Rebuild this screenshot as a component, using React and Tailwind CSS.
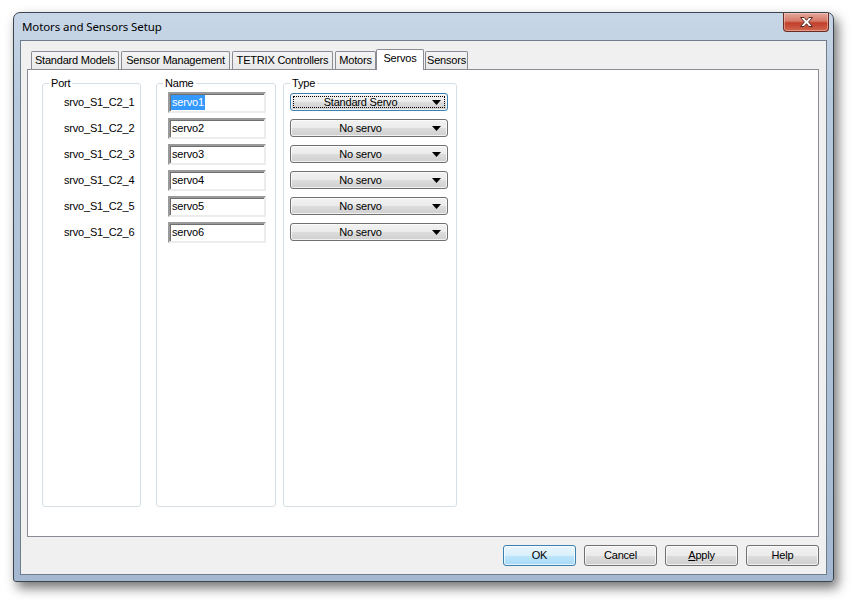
import React from 'react';

const ports = [1, 2, 3, 4, 5, 6];
const types = ['Standard Servo', 'No servo', 'No servo', 'No servo', 'No servo', 'No servo'];

const tabs = [
  { label: 'Standard Models', cls: 'ml-[4px] w-[88px]' },
  { label: 'Sensor Management', cls: 'ml-[2px] w-[109px]' },
  { label: 'TETRIX Controllers', cls: 'ml-[2px] w-[101px]' },
  { label: 'Motors', cls: 'ml-[2px] w-[41px]' },
  { label: 'Servos', cls: 'w-[48px]', active: true },
  { label: 'Sensors', cls: 'ml-[1px] w-[43px]' },
];

const btnBase =
  'w-[73px] h-[21px] rounded-[3px] border flex items-center justify-center text-black shadow-[inset_0_0_0_1px_rgba(255,255,255,0.7)]';
const btnGray =
  'border-[#707070] bg-[linear-gradient(180deg,#f2f2f2_0%,#ebebeb_50%,#dddddd_51%,#cfcfcf_100%)]';
const btnBlue =
  'border-[#3c7fb1] bg-[linear-gradient(180deg,#eaf6fd_0%,#d9f0fc_50%,#bee6fd_51%,#a7d9f5_100%)]';

const CloseGlyph = () => (
  <svg width="15" height="12" viewBox="0 0 15 12">
    <path
      d="M1.5 1.5 L5.2 1.5 L7.5 4.3 L9.8 1.5 L13.5 1.5 L9.6 6 L13.5 10.5 L9.8 10.5 L7.5 7.7 L5.2 10.5 L1.5 10.5 L5.4 6 Z"
      fill="#ffffff"
      stroke="#5a2a22"
      strokeWidth="1"
      strokeLinejoin="round"
    />
  </svg>
);

const Dropdown = ({ value, focused }) => (
  <div
    className={`relative ml-[6px] w-[158px] h-[18px] rounded-[3px] border flex items-center bg-[linear-gradient(180deg,#f2f2f2_0%,#ebebeb_50%,#dddddd_51%,#cfcfcf_100%)] shadow-[inset_0_0_0_1px_rgba(255,255,255,0.7)] ${
      focused ? 'border-[#3c7fb1]' : 'border-[#707070]'
    }`}
  >
    {focused && (
      <div className="absolute left-[2px] right-[2px] top-[2px] bottom-[2px] border border-dotted border-black" />
    )}
    <div className="flex-1 text-center pl-[2px]">{value}</div>
    <svg width="9" height="5" viewBox="0 0 9 5" className="mr-[6px] ml-[4px]">
      <path d="M0 0 H9 L4.5 5 Z" fill="#000" />
    </svg>
  </div>
);

const Group = ({ label, cls, children }) => (
  <fieldset className={`h-[430px] border border-[#d5dfe5] rounded-[3px] ${cls}`}>
    <legend className="ml-[6px] px-[2px] leading-[12px] text-[11px]">{label}</legend>
    {children}
  </fieldset>
);

export default function App() {
  return (
    <div className="w-[852px] h-[601px] bg-white pt-[12px] pl-[13px] font-['Liberation_Sans',Arial,sans-serif] text-[11px] tracking-[-0.2px] text-black">
      <div className="w-[821px] h-[570px] flex flex-col border border-[#3b4550] rounded-t-[7px] rounded-b-[3px] bg-[linear-gradient(180deg,#c8d7e7_0%,#b7c9dd_15%,#a4b9d1_100%)] shadow-[4px_6px_12px_rgba(0,0,0,0.55)]">
        {/* title bar */}
        <div className="h-[27px] flex items-start shrink-0">
          <div className="flex-1 pl-[8px] pt-[6px] font-['Noto_Sans','Open_Sans',sans-serif] text-[11.5px] tracking-[-0.1px] leading-[16px]">
            Motors and Sensors Setup
          </div>
          <div className="mr-[4px] w-[46px] h-[19px] rounded-b-[4px] border border-t-0 border-[#6b2c24] flex items-center justify-center bg-[linear-gradient(180deg,#e3a89c_0%,#d67a68_45%,#c23f2b_55%,#d0664f_100%)] shadow-[inset_0_0_0_1px_rgba(255,220,210,0.45)]">
            <CloseGlyph />
          </div>
        </div>

        {/* client area */}
        <div className="mx-[6px] h-[535px] border border-[#6f7d8c] bg-[#f0f0f0] flex flex-col pt-[8px] pl-[6px] pr-[7px]">
          <div className="h-[20px] flex items-end">
            {tabs.map((t) =>
              t.active ? (
                <div
                  key={t.label}
                  className={`relative z-10 -mb-px h-[21px] bg-white border border-b-0 border-[#898c95] rounded-t-[2px] flex justify-center pt-[2px] leading-[13px] ${t.cls}`}
                >
                  {t.label}
                </div>
              ) : (
                <div
                  key={t.label}
                  className={`h-[18px] border border-b-0 border-[#898c95] rounded-t-[2px] bg-[linear-gradient(180deg,#f4f4f4_0%,#e8e8e8_100%)] flex justify-center pt-[2px] leading-[13px] ${t.cls}`}
                >
                  {t.label}
                </div>
              )
            )}
          </div>

          <div className="h-[468px] bg-white border border-[#898c95] flex items-start pt-[7px] pl-[14px]">
            <Group label="Port" cls="w-[99px]">
              {ports.map((p) => (
                <div key={p} className="h-[26px] flex items-center pl-[21px]">
                  srvo_S1_C2_{p}
                </div>
              ))}
            </Group>
            <Group label="Name" cls="ml-[15px] w-[120px]">
              {ports.map((p) => (
                <div key={p} className="h-[26px] flex items-center">
                  <div className="ml-[11px] w-[98px] h-[21px] bg-white border-2 border-t-[#9a9a9a] border-l-[#9a9a9a] border-b-[#ececec] border-r-[#ececec] shadow-[inset_1px_1px_0_#6f6f6f] flex items-center pl-[1px]">
                    {p === 1 ? (
                      <span className="bg-[#3399ff] text-white px-[1px] leading-[15px]">servo1</span>
                    ) : (
                      <span className="px-[1px]">servo{p}</span>
                    )}
                  </div>
                </div>
              ))}
            </Group>
            <Group label="Type" cls="ml-[7px] w-[174px]">
              {types.map((t, i) => (
                <div key={i} className="h-[26px] flex items-center">
                  <Dropdown value={t} focused={i === 0} />
                </div>
              ))}
            </Group>
          </div>

          <div className="mt-[8px] flex justify-end gap-[8px]">
            <div className={`${btnBase} ${btnBlue}`}>OK</div>
            <div className={`${btnBase} ${btnGray}`}>Cancel</div>
            <div className={`${btnBase} ${btnGray}`}>
              <span>
                <span className="underline">A</span>pply
              </span>
            </div>
            <div className={`${btnBase} ${btnGray}`}>Help</div>
          </div>
        </div>
      </div>
    </div>
  );
}
